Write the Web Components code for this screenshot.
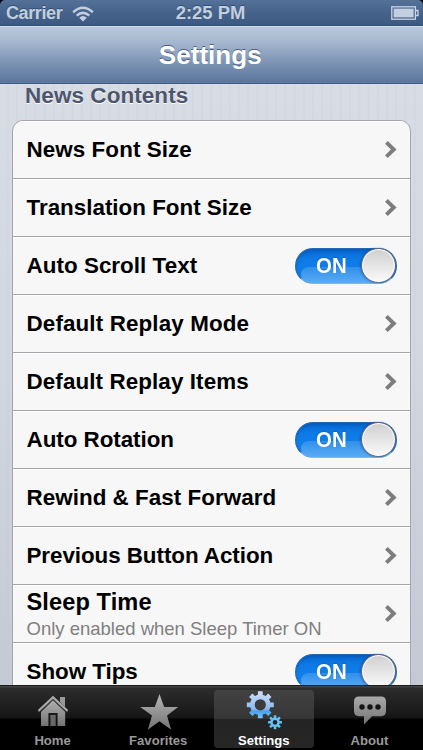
<!DOCTYPE html>
<html lang="en">
<head>
<meta charset="utf-8">
<title>Settings</title>
<style>
html,body{margin:0;height:100%;overflow:hidden;background:#000}
body{font-family:"Liberation Sans",Arial,sans-serif}
</style>
</head>
<body>
<settings-app></settings-app>
<script>
function define(name, html, setup) {
  const tpl = document.createElement('template');
  tpl.innerHTML = html;
  customElements.define(name, class extends HTMLElement {
    constructor() {
      super();
      this.attachShadow({mode: 'open'}).appendChild(tpl.content.cloneNode(true));
    }
    connectedCallback() { if (setup) setup(this, this.shadowRoot); }
  });
}

define('status-bar', `<style>
:host{display:grid;grid-template-columns:1fr auto 1fr;align-items:center;box-sizing:border-box;height:26px;padding:0 4px 0 6px;
 background:linear-gradient(#54719a,#48658d 40%,#3d5a83 92%,#38557f);color:#c3cfdf;font-weight:bold;font-size:18.4px;line-height:26px;text-shadow:0 -1px 0 #344f74;border-radius:5px 5px 0 0}
.l{display:flex;align-items:center;gap:10px}
.c{font-size:18px;letter-spacing:-.4px}
.t{margin-left:-4px}
.l svg{margin-top:1px}
.r{justify-self:end}
svg{display:block}
</style>
<div class="l"><span class="c">Carrier</span>
<svg width="22" height="16" viewBox="0 0 22 16" fill="none" stroke="#c3cfdf" stroke-width="2.5"><path d="M1.2 6.2Q11-2.7 20.8 6.2M4.7 9.6Q11 4.1 17.3 9.6"/><path d="M7.2 11.7Q11 8.4 14.8 11.7L11 15.5Z" fill="#c3cfdf" stroke="none"/></svg></div>
<span class="t">2:25 PM</span>
<svg class="r" width="28" height="14" viewBox="0 0 28 14"><rect x=".8" y=".8" width="23.6" height="12.4" fill="none" stroke="#cbd5e3" stroke-width="1.3"/><rect x="2.6" y="2.6" width="20" height="8.8" fill="#c3cfdf"/><path d="M24.4 4.5H27v5h-2.6" fill="none" stroke="#cbd5e3" stroke-width="1.3"/></svg>`);

define('nav-bar', `<style>
:host{display:flex;justify-content:center;align-items:center;box-sizing:border-box;height:58px;padding:1px 2.5px 0 0;
 border-top:1px solid #d0dae7;border-bottom:1px solid #3f5a82;
 background:linear-gradient(#b9c8db,#a7b9d0 25%,#8197b7 60%,#5a769b 98%,#627ca0);box-shadow:0 -1px #39547a;
 color:#fff;font-weight:bold;font-size:26.1px;text-shadow:0 -1.3px 0 #4b5d78}
</style><slot></slot>`);

define('group-title', `<style>
:host{display:block;height:36px;box-sizing:border-box;padding-left:25px;line-height:24px;font-weight:bold;font-size:22.5px;letter-spacing:.06px;color:#4c566c;text-shadow:0 1.3px 0 #fff}
</style><slot></slot>`);

define('settings-list', `<style>
:host{display:block;margin:0 12px;background:#f7f7f7;border:1px solid #a3a5aa;border-radius:11px;overflow:hidden}
</style><slot></slot>`);

define('settings-row', `<style>
:host{display:flex;justify-content:space-between;align-items:center;box-sizing:border-box;height:58px;padding:0 13.5px;border-bottom:1px solid #a3a5aa;box-shadow:inset 0 1px #fff}
.t{display:flex;flex-direction:column}
.m{font-weight:bold;font-size:22.4px;line-height:28px;color:#000;white-space:nowrap}
:host([detail]) .m{font-size:23.6px;line-height:27px;letter-spacing:.1px}
:host([detail]) .t{padding-top:3px}
.d{font-size:18.5px;line-height:25px;color:#808080;white-space:nowrap}
.d:empty{display:none}
</style><div class="t"><span class="m"><slot></slot></span><span class="d"></span></div><slot name="end"></slot>`,
 (el, root) => {
   root.querySelector('.d').textContent = el.getAttribute('detail') || '';
   if (el.hasAttribute('track')) root.querySelector('.m').style.letterSpacing = el.getAttribute('track') + 'px';
 });

define('row-chevron', `<style>:host{display:block}svg{display:block}</style>
<svg width="13" height="19" viewBox="0 0 13 19"><path d="M2.4 2.3 9.8 9.5 2.4 16.7" fill="none" stroke="#7d7d7d" stroke-width="3.9"/></svg>`);

define('toggle-switch', `<style>
:host{display:flex;justify-content:space-between;align-items:center;box-sizing:border-box;width:102px;height:36px;padding-left:20px;border-radius:18px;
 background:linear-gradient(#0768d2,#0d7ae6 30%,#1482ea);position:relative;
 border:1px solid #2367b2;border-bottom-color:#83b8e8;box-shadow:inset 0 2px 3px #0750a580,0 1px #fff;
 color:#fff;font-weight:bold;font-size:22px;line-height:36px;text-shadow:0 -1px 1px #1765b6}
:host::before{content:"";position:absolute;left:5px;right:16px;bottom:0;height:16px;border-radius:12px 0 0 14px;background:linear-gradient(#2f90ec,#5aabf4)}
span{position:relative;transform:scaleX(.93);transform-origin:0 50%}
i{position:relative;box-sizing:border-box;width:35px;height:35px;flex:none;border-radius:50%;border:1.2px solid #686a6e;background:linear-gradient(#cfcfcf,#e5e5e5 50%,#fafafa);box-shadow:inset 0 0 1px 1px #fff,-1px 0 2px #06469080}
</style><span>ON</span><i></i>`);

define('tab-item', `<style>
:host{display:flex;flex-direction:column;align-items:center;justify-content:space-between;box-sizing:border-box;width:100px;height:58px;border-radius:4px;font-weight:bold;font-size:13.1px;line-height:14px;color:#999}
:host([selected]){color:#fff;background:linear-gradient(#424242,#363636 49%,#242424 50%,#262626)}
span{padding-right:1px}
::slotted(svg){display:block}
</style><slot name="icon"></slot><span><slot></slot></span>`);

define('tab-bar', `<style>
:host{display:flex;gap:5.6px;justify-content:center;box-sizing:border-box;height:65px;padding-top:4px;border-top:1px solid #1b1b1b;background:linear-gradient(#424242 0 1px,#2d2d2d 2px,#151515 32px,#000 33px)}
</style><slot></slot>`);

const gear = (cx, cy, r, hole, tooth, len, n) => {
  let s = '';
  for (let i = 0; i < n; i++) s += `<rect stroke="none" x="${cx - tooth / 2}" y="${cy - r - len}" width="${tooth}" height="${len + 2}" rx=".4" transform="rotate(${i * 360 / n} ${cx} ${cy})"/>`;
  return s + `<circle cx="${cx}" cy="${cy}" r="${(r + hole) / 2}" fill="none" stroke-width="${r - hole}"/>`;
};

define('settings-app', `<style>
:host{display:flex;flex-direction:column;height:750px;width:423px;overflow:hidden}
main{flex:1;min-height:0;overflow:hidden;background:repeating-linear-gradient(90deg,#fff0 0 6.2px,#b8c2d122 7px 8.6px,#fff0 9.25px),linear-gradient(#d8dce5,#d2d7e0 45%,#c5c9d4)}
</style>
<status-bar></status-bar>
<nav-bar>Settings</nav-bar>
<main>
<group-title>News Contents</group-title>
<settings-list>
<settings-row track=".08">News Font Size<row-chevron slot="end"></row-chevron></settings-row>
<settings-row track="0">Translation Font Size<row-chevron slot="end"></row-chevron></settings-row>
<settings-row track=".04">Auto Scroll Text<toggle-switch slot="end"></toggle-switch></settings-row>
<settings-row track=".13">Default Replay Mode<row-chevron slot="end"></row-chevron></settings-row>
<settings-row track=".1">Default Replay Items<row-chevron slot="end"></row-chevron></settings-row>
<settings-row track="-.04">Auto Rotation<toggle-switch slot="end"></toggle-switch></settings-row>
<settings-row track=".04">Rewind &amp; Fast Forward<row-chevron slot="end"></row-chevron></settings-row>
<settings-row track="-.06">Previous Button Action<row-chevron slot="end"></row-chevron></settings-row>
<settings-row detail="Only enabled when Sleep Timer ON">Sleep Time<row-chevron slot="end"></row-chevron></settings-row>
<settings-row track="-.04">Show Tips<toggle-switch slot="end"></toggle-switch></settings-row>
</settings-list>
</main>
<tab-bar>
<tab-item>
<svg slot="icon" width="40" height="40" viewBox="0 0 40 40"><defs><linearGradient id="g" x2="0" y2="1"><stop stop-color="#b0b0b0"/><stop offset="1" stop-color="#737373"/></linearGradient></defs>
<path d="M27 7h5V17l-5-5Z" fill="#999"/><path d="M8 22 20 10.2 32.2 22V36H24V23.5H16V36H8Z" fill="url(#g)"/><path d="M5.5 22 20 8.8 34.5 22" fill="none" stroke="#484848" stroke-width="1.6"/><path d="M5.5 20.7 20 7.2 34.5 20.7" fill="none" stroke="#aaa" stroke-width="2"/><path d="M16 36V23.5h8V36" fill="none" stroke="#1c1c1c" stroke-width="1.2"/><path d="M17.3 25h5.4v11h-5.4Z" fill="#686868"/></svg>Home</tab-item>
<tab-item>
<svg slot="icon" width="40" height="42" viewBox="0 0 40 42"><defs><linearGradient id="s" x2="0" y2="1"><stop stop-color="#b5b5b5"/><stop offset="1" stop-color="#737373"/></linearGradient></defs>
<path d="M20.5 4 25.2 17H39.2L28 25.5 32.2 39.7 20.5 31.3 8.8 39.7 13 25.5 1.2 17H15.8Z" fill="url(#s)"/></svg>Favorites</tab-item>
<tab-item selected>
<svg slot="icon" width="42" height="42" viewBox="3 1 42 42"><defs><linearGradient id="b" gradientUnits="userSpaceOnUse" x1="0" y1="2" x2="0" y2="29"><stop stop-color="#d2e2f8"/><stop offset=".66" stop-color="#8abaf0"/><stop offset=".75" stop-color="#49a0ee"/><stop offset="1" stop-color="#73c5fa"/></linearGradient>
<mask id="m1" maskUnits="userSpaceOnUse" x="0" y="0" width="42" height="42"><g fill="#fff" stroke="#fff">GEAR1</g></mask><mask id="m2" maskUnits="userSpaceOnUse" x="0" y="0" width="42" height="42"><g fill="#fff" stroke="#fff">GEAR2</g></mask></defs>
<rect width="42" height="42" fill="url(#b)" mask="url(#m1)"/><rect width="42" height="42" fill="#62c4f0" mask="url(#m2)"/></svg>Settings</tab-item>
<tab-item>
<svg slot="icon" width="40" height="40" viewBox="0 0 40 40"><defs><linearGradient id="c" x2="0" y2="1"><stop stop-color="#aaa"/><stop offset="1" stop-color="#737373"/></linearGradient></defs>
<path d="M9 6.5H31Q36 6.5 36 11.5V21Q36 26.2 31 26.2H22L14 34.5V26.2H9Q4 26.2 4 21V11.5Q4 6.5 9 6.5Z" fill="url(#c)"/><g fill="#141414"><circle cx="12" cy="17" r="2.7"/><circle cx="20" cy="17" r="2.7"/><circle cx="28" cy="17" r="2.7"/></g></svg>About</tab-item>
</tab-bar>`.replace('GEAR1', gear(20.3, 15.8, 10.3, 5.6, 4.8, 3.2, 8))
        .replace('GEAR2', gear(35, 33.3, 4.8, 2.4, 2.5, 2.2, 8)));
</script>
</body>
</html>
